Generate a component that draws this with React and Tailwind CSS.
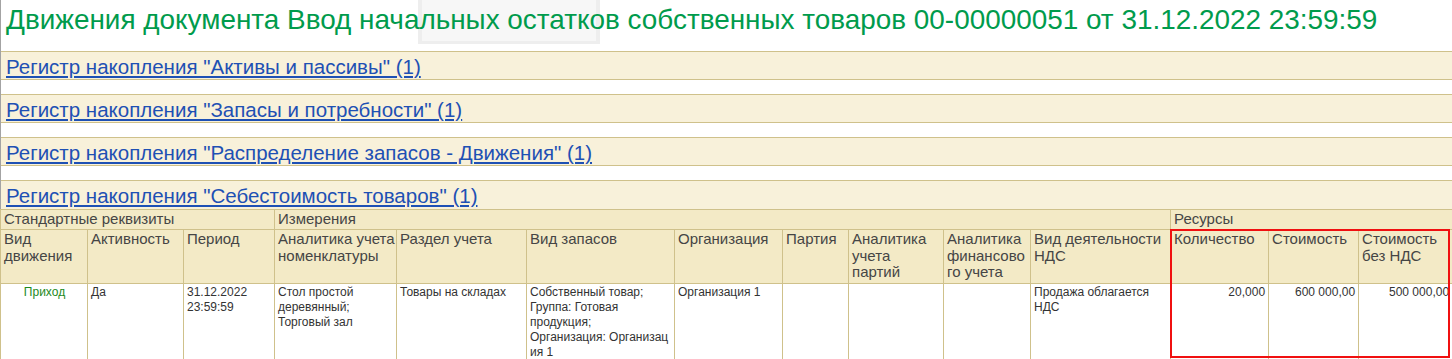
import React from "react";

const cols = [87, 96, 91, 122, 130, 148, 108, 66, 95, 87, 140, 98, 90, 94];

const banners = [
  'Регистр накопления "Активы и пассивы" (1)',
  'Регистр накопления "Запасы и потребности" (1)',
  'Регистр накопления "Распределение запасов - Движения" (1)',
  'Регистр накопления "Себестоимость товаров" (1)',
];

const headers = [
  ["Вид", "движения"],
  ["Активность"],
  ["Период"],
  ["Аналитика учета", "номенклатуры"],
  ["Раздел учета"],
  ["Вид запасов"],
  ["Организация"],
  ["Партия"],
  ["Аналитика", "учета", "партий"],
  ["Аналитика", "финансово", "го учета"],
  ["Вид деятельности", "НДС"],
  ["Количество"],
  ["Стоимость"],
  ["Стоимость", "без НДС"],
];

function Lines({ lines }) {
  return lines.map((l, i) => (
    <React.Fragment key={i}>
      {i > 0 && <br />}
      {l}
    </React.Fragment>
  ));
}

export default function App() {
  const hc = "border border-[#cfc18b] bg-[#f3eac6] align-top text-left pl-[3px] pr-[2px] pt-[1px] font-normal text-[15px] leading-[16.7px] text-[#454545] whitespace-nowrap overflow-hidden";
  const dc = "border border-[#cfc18b] bg-white align-top pl-[3px] pr-[2px] pt-[1px] text-[12px] leading-[15px] text-[#333333] whitespace-nowrap overflow-hidden";
  return (
    <div
      className="relative w-[1452px] h-[359px] overflow-hidden bg-white"
      style={{ fontFamily: '"Liberation Sans", Arial, sans-serif' }}
    >
      <div className="absolute left-[418px] top-0 w-[182px] h-[44px] bg-[#eeeeee] px-[4px] pb-[3px]">
        <div className="w-full h-full bg-[#f7f7f7]" />
      </div>
      <div className="border-l border-[#a3a3a3]">
        <div className="relative h-[51px] pl-[5px] pt-[2px] text-[27.9px] leading-[36px] text-[#009b4c] whitespace-nowrap">
          Движения документа Ввод начальных остатков собственных товаров 00-00000051 от 31.12.2022 23:59:59
        </div>
        {banners.map((b, i) => (
          <div
            key={i}
            className={
              "h-[29px] border-y border-[#cfc18b] bg-[#f8f1da] pl-[5px] pt-[2px] text-[20.5px] leading-[25px] whitespace-nowrap " +
              (i > 0 ? "mt-[14px] " : "") +
              (i === 3 ? "border-b-0 h-[28px]" : "")
            }
          >
            <span className="text-[#1e50b4] underline underline-offset-[2px] decoration-[2px]">{b}</span>
          </div>
        ))}
      </div>
      <div className="relative">
        <table className="table-fixed border-collapse w-[1452px]">
          <colgroup>
            {cols.map((w, i) => (
              <col key={i} style={{ width: w }} />
            ))}
          </colgroup>
          <tbody>
            <tr className="h-[20px]">
              <td colSpan={3} className={hc}>Стандартные реквизиты</td>
              <td colSpan={8} className={hc}>Измерения</td>
              <td colSpan={3} className={hc}>Ресурсы</td>
            </tr>
            <tr className="h-[54px]">
              {headers.map((h, i) => (
                <td key={i} className={hc}>
                  <Lines lines={h} />
                </td>
              ))}
            </tr>
            <tr className="h-[76px]">
              <td className={dc + " text-center"}>
                <span className="text-[#1d8a1d]">Приход</span>
              </td>
              <td className={dc}>Да</td>
              <td className={dc}>
                <Lines lines={["31.12.2022", "23:59:59"]} />
              </td>
              <td className={dc}>
                <Lines lines={["Стол простой", "деревянный;", "Торговый зал"]} />
              </td>
              <td className={dc}>Товары на складах</td>
              <td className={dc}>
                <Lines lines={["Собственный товар;", "Группа: Готовая", "продукция;", "Организация: Организац", "ия 1"]} />
              </td>
              <td className={dc}>Организация 1</td>
              <td className={dc}></td>
              <td className={dc}></td>
              <td className={dc}></td>
              <td className={dc + " text-[#35305c]"}>
                <Lines lines={["Продажа облагается", "НДС"]} />
              </td>
              <td className={dc + " text-right pr-[3px]"}>20,000</td>
              <td className={dc + " text-right pr-[3px]"}>600 000,00</td>
              <td className={dc + " text-right pr-[3px]"}>500 000,00</td>
            </tr>
          </tbody>
        </table>
        <div className="absolute left-[1170px] top-[20px] w-[280px] h-[129px] border-2 border-[#f01010] pointer-events-none" />
      </div>
    </div>
  );
}
